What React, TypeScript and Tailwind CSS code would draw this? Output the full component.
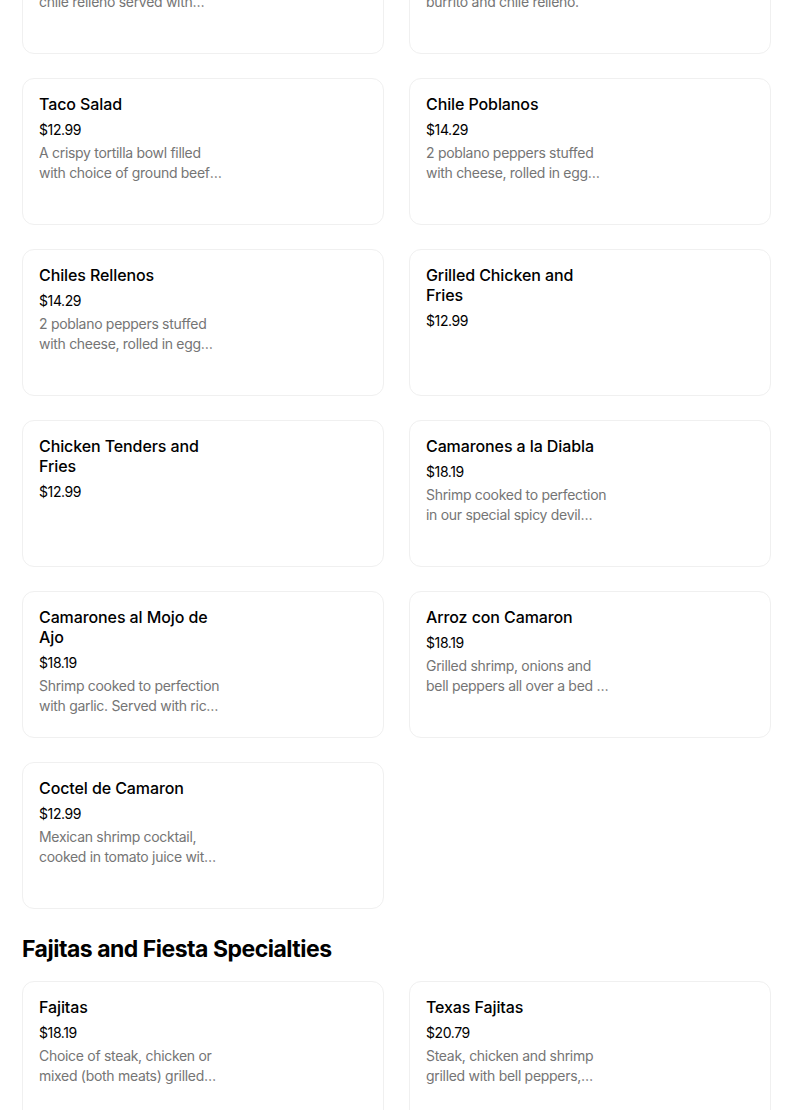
import React from 'react';

interface MenuItem {
  name: string;
  price: string;
  description?: string;
}

const scrolledItems: MenuItem[] = [
  {
    name: 'Combination Plate',
    price: '$16.49',
    description: 'Beef enchilada, taco and chile relleno served with guacamole.',
  },
  {
    name: 'Special Mexicano',
    price: '$16.49',
    description: 'One steak taco, a cheese burrito and chile relleno.',
  },
];

const specialties: MenuItem[] = [
  {
    name: 'Taco Salad',
    price: '$12.99',
    description: 'A crispy tortilla bowl filled with choice of ground beef or chicken, beans, lettuce and cheese.',
  },
  {
    name: 'Chile Poblanos',
    price: '$14.29',
    description: '2 poblano peppers stuffed with cheese, rolled in egg batter and topped with sauce.',
  },
  {
    name: 'Chiles Rellenos',
    price: '$14.29',
    description: '2 poblano peppers stuffed with cheese, rolled in egg batter and topped with sauce.',
  },
  { name: 'Grilled Chicken and Fries', price: '$12.99' },
  { name: 'Chicken Tenders and Fries', price: '$12.99' },
  {
    name: 'Camarones a la Diabla',
    price: '$18.19',
    description: 'Shrimp cooked to perfection in our special spicy devil sauce. Served with rice and beans.',
  },
  {
    name: 'Camarones al Mojo de Ajo',
    price: '$18.19',
    description: 'Shrimp cooked to perfection with garlic. Served with rice, beans and tortillas.',
  },
  {
    name: 'Arroz con Camaron',
    price: '$18.19',
    description: 'Grilled shrimp, onions and bell peppers all over a bed of rice with cheese dip.',
  },
  {
    name: 'Coctel de Camaron',
    price: '$12.99',
    description: 'Mexican shrimp cocktail, cooked in tomato juice with onions, cilantro and avocado.',
  },
];

const fajitas: MenuItem[] = [
  {
    name: 'Fajitas',
    price: '$18.19',
    description: 'Choice of steak, chicken or mixed (both meats) grilled with bell peppers and onions.',
  },
  {
    name: 'Texas Fajitas',
    price: '$20.79',
    description: 'Steak, chicken and shrimp grilled with bell peppers, onions and tomatoes.',
  },
];

const MenuCard: React.FC<{ item: MenuItem }> = ({ item }) => (
  <div className="h-[147px] rounded-xl border border-[#f0f0f0] bg-white px-4 pt-[15px]">
    <div className="w-[184px]">
      <div className="text-[16px] font-medium leading-5 tracking-[-0.1px] text-black">{item.name}</div>
      <div className="mt-[6px] text-[14px] leading-5 tracking-[-0.4px] text-black">{item.price}</div>
      {item.description && (
        <p className="mt-[3px] line-clamp-2 text-[14px] leading-5 tracking-[-0.3px] text-[#757575]">
          {item.description}
        </p>
      )}
    </div>
  </div>
);

const CardGrid: React.FC<{ items: MenuItem[] }> = ({ items }) => (
  <div className="grid grid-cols-2 gap-x-[25px] gap-y-6">
    {items.map((item) => (
      <MenuCard key={item.name} item={item} />
    ))}
  </div>
);

export default function App() {
  return (
    <div className="h-[1110px] overflow-hidden bg-white" style={{ fontFamily: 'Inter, "Noto Sans", sans-serif' }}>
      <div className="-mt-[93px] ml-[22px] flex w-[749px] flex-col">
        <div className="flex flex-col gap-6">
          <CardGrid items={scrolledItems} />
          <CardGrid items={specialties} />
        </div>
        <h2 className="mb-4 mt-6 text-[23px] font-bold leading-8 tracking-[-0.5px] text-black">
          Fajitas and Fiesta Specialties
        </h2>
        <CardGrid items={fajitas} />
      </div>
    </div>
  );
}
